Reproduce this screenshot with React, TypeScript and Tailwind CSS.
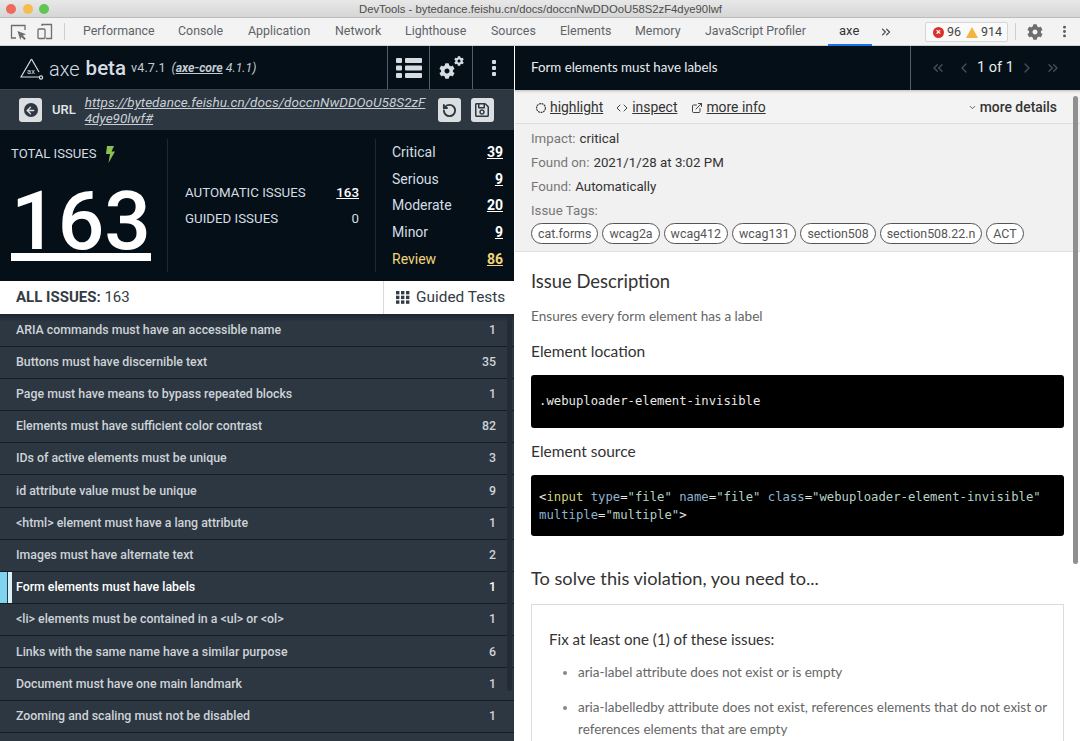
import React from "react";
import { ExternalLink, ChevronDown, ChevronLeft, ChevronRight, ChevronsLeft, ChevronsRight, ChevronsRight as More, MoreVertical, RotateCcw, ArrowLeft, Code } from "lucide-react";
import { FaCog, FaRegSave } from "react-icons/fa";

const tabs: [string, number][] = [["Performance", 83], ["Console", 178], ["Application", 248], ["Network", 335], ["Lighthouse", 405], ["Sources", 491], ["Elements", 560], ["Memory", 635], ["JavaScript Profiler", 705]];
const rows: [string, string][] = [
  ["ARIA commands must have an accessible name", "1"],
  ["Buttons must have discernible text", "35"],
  ["Page must have means to bypass repeated blocks", "1"],
  ["Elements must have sufficient color contrast", "82"],
  ["IDs of active elements must be unique", "3"],
  ["id attribute value must be unique", "9"],
  ["<html> element must have a lang attribute", "1"],
  ["Images must have alternate text", "2"],
  ["Form elements must have labels", "1"],
  ["<li> elements must be contained in a <ul> or <ol>", "1"],
  ["Links with the same name have a similar purpose", "6"],
  ["Document must have one main landmark", "1"],
  ["Zooming and scaling must not be disabled", "1"],
];
const sev: [string, string][] = [["Critical", "39"], ["Serious", "9"], ["Moderate", "20"], ["Minor", "9"], ["Review", "86"]];
const tags = ["cat.forms", "wcag2a", "wcag412", "wcag131", "section508", "section508.22.n", "ACT"];

function AxeLogo() {
  return (
    <svg width="24" height="24" viewBox="0 0 24 24" fill="none" stroke="#d5dde3" strokeWidth="1.2">
      <path d="M11.5 2 L1 20 H20" />
      <path d="M11.5 2 L19 15" />
      <circle cx="21" cy="20.5" r="1.6" />
      <text x="11" y="16.5" fontSize="7.5" fill="#d5dde3" stroke="none" textAnchor="middle" fontFamily="Roboto, sans-serif">ax</text>
    </svg>
  );
}

function Gears() {
  return (
    <span className="relative block w-[25px] h-[23px] text-[#d5dde3]">
      <FaCog size={16} className="absolute left-0 bottom-0" />
      <FaCog size={10} className="absolute right-0 top-0" />
    </span>
  );
}

export default function App() {
  return (
    <div className="w-[1080px] h-[741px] overflow-hidden flex flex-col bg-white font-['Roboto',sans-serif]">
      <div className="h-[18px] shrink-0 bg-linear-to-b from-[#e8e8e8] to-[#d6d6d6] border-b border-[#bcbcbc] flex items-center relative">
        <div className="flex gap-[6.5px] pl-[6px]">
          <span className="w-[10px] h-[10px] rounded-full bg-[#ee6a5f]" />
          <span className="w-[10px] h-[10px] rounded-full bg-[#f5bd4f]" />
          <span className="w-[10px] h-[10px] rounded-full bg-[#61c454]" />
        </div>
        <span className="absolute left-[359px] top-[1px] text-[11.3px] leading-[16px] text-[#4c4c4c] whitespace-nowrap font-['Liberation_Sans',sans-serif]">DevTools - bytedance.feishu.cn/docs/doccnNwDDOoU58S2zF4dye90lwf</span>
      </div>

      <div className="h-[28px] shrink-0 bg-[#f3f3f3] border-b border-[#d0d0d0] relative text-[12.4px] text-[#5f6368]">
        <svg width="17" height="17" viewBox="0 0 17 17" fill="none" stroke="#6e6e6e" strokeWidth="1.3" className="absolute left-[10px] top-[6px]">
          <path d="M15 6V1.5H1.5V14H6" />
          <path d="M7.5 7 L16 10.2 L12.8 11.5 L15.8 14.6 L14.4 16 L11.3 13 L10.3 16 Z" fill="#6e6e6e" stroke="none" />
        </svg>
        <svg width="16" height="17" viewBox="0 0 16 17" fill="none" stroke="#6e6e6e" strokeWidth="1.3" className="absolute left-[37px] top-[5px]">
          <path d="M5 3V1.5h9.5v14H9" />
          <rect x="1" y="6" width="7" height="9.5" rx="1" />
        </svg>
        <span className="absolute left-[64px] top-[5px] w-px h-[17px] bg-[#cfcfcf]" />
        {tabs.map(([t, x]) => (
          <span key={t} className="absolute top-[5px] leading-[16px] whitespace-nowrap" style={{ left: x }}>{t}</span>
        ))}
        <span className="absolute left-[839px] top-[5px] leading-[16px] text-[13px] text-[#333]">axe</span>
        <span className="absolute left-[828px] w-[44px] bottom-[-1px] h-[2px] bg-[#1a73e8]" />
        <More size={14} className="absolute left-[879px] top-[7px] text-[#444]" />
        <div className="absolute left-[925px] top-[4px] w-[83px] h-[20px] border border-[#d6d6d6] bg-[#fafafa] rounded-[2px] flex items-center pl-[7px] text-[12.5px] text-[#444]">
          <span className="w-[11px] h-[11px] rounded-full bg-[#d9302c] text-white text-[9px] leading-[11px] text-center font-bold">×</span>
          <span className="ml-[3px]">96</span>
          <svg width="12" height="11" viewBox="0 0 12 11" className="ml-[5px]"><path d="M6 0 L12 11 H0 Z" fill="#f2b53d" /></svg>
          <span className="ml-[3px]">914</span>
        </div>
        <span className="absolute left-[1015px] top-[5px] w-px h-[17px] bg-[#cfcfcf]" />
        <FaCog size={16} className="absolute left-[1027px] top-[6px] text-[#6e6e6e]" />
        <MoreVertical size={15} strokeWidth={2.6} className="absolute left-[1057px] top-[6px] text-[#555]" />
      </div>

      <div className="flex-1 flex min-h-0">
        <div className="w-[514px] shrink-0 flex flex-col bg-[#2d3741] overflow-hidden">
          <div className="h-[43px] shrink-0 bg-[#040f18] flex items-center">
            <div className="flex-1 flex items-center pl-[20px] pt-[2px] text-[#d5dde3]">
              <AxeLogo />
              <span className="ml-[5px] text-[20px] font-light">axe</span>
              <span className="ml-[6px] text-[20.5px] font-medium">beta</span>
              <span className="ml-[5px] text-[12.6px] text-[#c3cbd1] tracking-[0.1px]">v4.7.1</span>
              <span className="ml-[6px] text-[12.3px] italic text-[#c3cbd1]">(<span className="underline font-bold">axe-core</span> 4.1.1)</span>
            </div>
            <div className="w-[42px] h-full border-l border-[#56606a] flex items-center justify-center">
              <svg width="26" height="20" viewBox="0 0 26 20" fill="#d5dde3">
                <rect x="0" y="0" width="6" height="5" rx="1" /><rect x="9" y="0" width="17" height="5" rx="1" />
                <rect x="0" y="7.5" width="6" height="5" rx="1" /><rect x="9" y="7.5" width="17" height="5" rx="1" />
                <rect x="0" y="15" width="6" height="5" rx="1" /><rect x="9" y="15" width="17" height="5" rx="1" />
              </svg>
            </div>
            <div className="w-[43px] h-full border-l border-[#56606a] flex items-center justify-center"><Gears /></div>
            <div className="w-[42px] h-full border-l border-[#56606a] flex items-center justify-center">
              <svg width="4" height="16" viewBox="0 0 4 16" fill="#d5dde3"><rect width="4" height="4" rx="1" /><rect y="6" width="4" height="4" rx="1" /><rect y="12" width="4" height="4" rx="1" /></svg>
            </div>
          </div>

          <div className="h-[41px] shrink-0 bg-[#2d3741] flex items-center pl-[19px] border-t border-[#3b444e]">
            <span className="w-[23px] h-[24px] rounded-[3px] bg-[#dcdfe2] flex items-center justify-center">
              <span className="w-[14px] h-[14px] rounded-full bg-[#2d3741] flex items-center justify-center"><ArrowLeft size={11} strokeWidth={3} className="text-[#dcdfe2]" /></span>
            </span>
            <span className="ml-[10px] text-[13px] font-medium text-[#e4e7ea]">URL</span>
            <a className="ml-[9px] w-[342px] text-[13.55px] leading-[16px] italic underline text-[#c9cfd4] break-all">https://bytedance.feishu.cn/docs/doccnNwDDOoU58S2zF4dye90lwf#</a>
            <span className="ml-[11px] w-[23px] h-[24px] rounded-[3px] bg-[#dcdfe2] flex items-center justify-center"><RotateCcw size={15} strokeWidth={3} className="text-[#2d3741]" /></span>
            <span className="ml-[10px] w-[23px] h-[24px] rounded-[3px] bg-[#dcdfe2] flex items-center justify-center"><FaRegSave size={16} className="text-[#2d3741]" /></span>
          </div>

          <div className="h-[151px] shrink-0 bg-[#040f18] flex py-[9px]">
            <div className="w-[168px] border-r border-[#1e2934] pl-[11px] flex flex-col">
              <div className="flex items-center text-[13.1px] text-[#d5dde3] h-[29px] pt-[1px]">
                TOTAL ISSUES
                <svg width="10" height="17" viewBox="0 0 10 17" className="ml-[9px]"><path d="M2 0h7L6.5 5.5H10L3.5 17 5 8H1Z" fill="#8cc152" /></svg>
              </div>
              <div className="w-[140px] h-[93px] border-b-[8px] border-white flex items-end justify-center text-[82px] font-medium leading-[63px] text-white">163</div>
            </div>
            <div className="w-[208px] border-r border-[#1e2934] pl-[17px] pr-[16px] pt-[41px] text-[13.3px] text-[#d5dde3]">
              <div className="flex justify-between h-[26px] items-center"><span>AUTOMATIC ISSUES</span><span className="underline font-medium text-white">163</span></div>
              <div className="flex justify-between h-[26px] items-center"><span>GUIDED ISSUES</span><span>0</span></div>
            </div>
            <div className="flex-1 pl-[16px] pr-[11px] pt-[0.5px] text-[14px] text-[#d5dde3]">
              {sev.map(([s, n]) => (
                <div key={s} className={`flex justify-between h-[26.6px] items-center ${s === "Review" ? "text-[#f2d57a]" : ""}`}>
                  <span>{s}</span><span className={`underline font-bold ${s === "Review" ? "" : "text-white"}`}>{n}</span>
                </div>
              ))}
            </div>
          </div>

          <div className="h-[33px] shrink-0 bg-white flex items-center text-[#333b44]">
            <div className="flex-1 pl-[16px] text-[15px]"><b className="font-bold">ALL ISSUES:</b> 163</div>
            <div className="w-[131px] h-full border-l border-[#d9d9d9] flex items-center pl-[12px] text-[15.4px]">
              <svg width="14" height="13" viewBox="0 0 14 13" fill="#333b44" className="mr-[6px]">
                {[0, 5, 10].map((x) => [0, 4.7, 9.4].map((y) => <rect key={`${x}-${y}`} x={x} y={y} width="3.4" height="3.4" />))}
              </svg>
              Guided Tests
            </div>
          </div>

          <div className="flex-1 relative overflow-hidden pt-[0.4px]">
            {rows.map(([t, n]) => {
              const on = t === "Form elements must have labels";
              return (
                <div key={t} className={`h-[32.2px] box-border border-b border-[#141d26] flex items-center pl-[16px] pr-[18px] text-[12.35px] font-medium ${on ? "text-white" : "text-[#ced3d8]"} relative`}>
                  {on && <>
                    <span className="absolute left-0 top-0 bottom-0 w-[7px] bg-[#7fd4ef]" />
                    <span className="absolute left-[8px] top-0 bottom-0 w-[4px] bg-[#d9f2fa]" />
                  </>}
                  <span className="flex-1">{t}</span><span>{n}</span>
                </div>
              );
            })}
            <span className="absolute left-0 right-0 top-0 h-[8px] bg-linear-to-b from-[#1d2630] to-transparent" />
            <span className="absolute right-[2px] top-[2px] w-[5px] h-[375px] rounded-full bg-[#232b34]" />
          </div>
        </div>

        <div className="w-px shrink-0 bg-white" />

        <div className="flex-1 flex flex-col min-w-0 relative overflow-hidden">
          <div className="h-[44px] shrink-0 bg-[#040f18] flex items-center font-['Lato',sans-serif]">
            <span className="flex-1 pl-[16px] text-[13.3px] text-[#e8ecef]">Form elements must have labels</span>
            <div className="w-[170px] h-full border-l border-[#56606a] flex items-center justify-center text-[#e8ecef] text-[14.5px] font-['Roboto',sans-serif]">
              <ChevronsLeft size={16} className="text-[#46505a]" />
              <ChevronLeft size={16} className="ml-[10px] text-[#46505a]" />
              <span className="ml-[5px]">1 of 1</span>
              <ChevronRight size={16} className="ml-[5px] text-[#46505a]" />
              <ChevronsRight size={16} className="ml-[10px] text-[#46505a]" />
            </div>
          </div>

          <div className="h-[34px] shrink-0 bg-[#f3f3f3] border-b border-[#dedede] shadow-[inset_0_3px_3px_-2px_#bbb] flex items-center pl-[20px] pr-[23px] pt-[2px] text-[13.9px] text-[#333]">
            <svg width="12" height="12" viewBox="0 0 12 12" fill="none" stroke="#333" strokeWidth="1.1" className="mr-[3px]"><circle cx="6" cy="6" r="4.4" strokeDasharray="2 0.6" /></svg>
            <span className="underline">highlight</span>
            <Code size={12} className="ml-[13px] mr-[4px] text-[#444]" />
            <span className="underline">inspect</span>
            <ExternalLink size={12} className="ml-[14px] mr-[3px] text-[#444]" />
            <span className="underline">more info</span>
            <span className="flex-1" />
            <ChevronDown size={9} strokeWidth={2} className="mr-[3px]" />
            <span className="font-medium">more details</span>
          </div>

          <div className="h-[128px] shrink-0 bg-[#f1f1f1] border-b border-[#dedede] pl-[16px] pt-[3px] text-[13.3px] text-[#777]">
            <div className="h-[24px] flex items-center">Impact:<span className="ml-[4px] text-[#333]">critical</span></div>
            <div className="h-[24px] flex items-center">Found on:<span className="ml-[4px] text-[#333]">2021/1/28 at 3:02 PM</span></div>
            <div className="h-[24px] flex items-center">Found:<span className="ml-[4px] text-[#333]">Automatically</span></div>
            <div className="h-[23px] flex items-center">Issue Tags:</div>
            <div className="flex gap-[4px] mt-[1px]">
              {tags.map((t) => (
                <span key={t} className="h-[21px] px-[6px] rounded-full border border-[#555] bg-white text-[12.4px] leading-[19px] text-[#555] whitespace-nowrap">{t}</span>
              ))}
            </div>
          </div>

          <div className="flex-1 bg-white pl-[16px] pr-[16px] font-['Lato',sans-serif] text-[#444]">
            <h2 className="mt-[17px] text-[18.4px] leading-[24px] text-[#333]">Issue Description</h2>
            <p className="mt-[14px] text-[13.6px] leading-[18px] text-[#666]">Ensures every form element has a label</p>
            <h3 className="mt-[16px] text-[15.5px] leading-[20px] text-[#333]">Element location</h3>
            <div className="mt-[14px] h-[53px] rounded-[3px] bg-black flex items-center pl-[8px] font-['DejaVu_Sans_Mono',monospace] text-[12.25px] text-[#e8e8e8]">.webuploader-element-invisible</div>
            <h3 className="mt-[13px] text-[15.5px] leading-[20px] text-[#333]">Element source</h3>
            <div className="mt-[14px] h-[61px] rounded-[3px] bg-black pl-[8px] pt-[13px] font-['DejaVu_Sans_Mono',monospace] text-[12.25px] leading-[18px] text-[#e8e8e8] whitespace-pre">
              <div>&lt;<span className="text-[#d6d27e]">input</span> <span className="text-[#8fb4cf]">type</span>=<span className="text-[#b5d3c4]">"file"</span> <span className="text-[#8fb4cf]">name</span>=<span className="text-[#b5d3c4]">"file"</span> <span className="text-[#8fb4cf]">class</span>=<span className="text-[#b5d3c4]">"webuploader-element-invisible"</span></div>
              <div><span className="text-[#8fb4cf]">multiple</span>=<span className="text-[#b5d3c4]">"multiple"</span>&gt;</div>
            </div>
            <h2 className="mt-[30px] text-[18.2px] leading-[24px] text-[#333]">To solve this violation, you need to...</h2>
            <div className="mt-[14px] border border-[#dcdcdc] pl-[17px] pr-[15px] pt-[24px] h-[200px]">
              <div className="text-[15.1px] leading-[20px] text-[#333]">Fix at least one (1) of these issues:</div>
              <ul className="mt-[12px] pl-[29px] list-disc text-[13.5px] leading-[22px] text-[#666] marker:text-[#888]">
                <li className="mt-[5px]">aria-label attribute does not exist or is empty</li>
                <li className="mt-[13px]">aria-labelledby attribute does not exist, references elements that do not exist or references elements that are empty</li>
              </ul>
            </div>
          </div>
          <span className="absolute right-[2px] top-[50px] w-[5px] h-[468px] rounded-full bg-[#8f8f8f]" />
        </div>
      </div>
    </div>
  );
}
